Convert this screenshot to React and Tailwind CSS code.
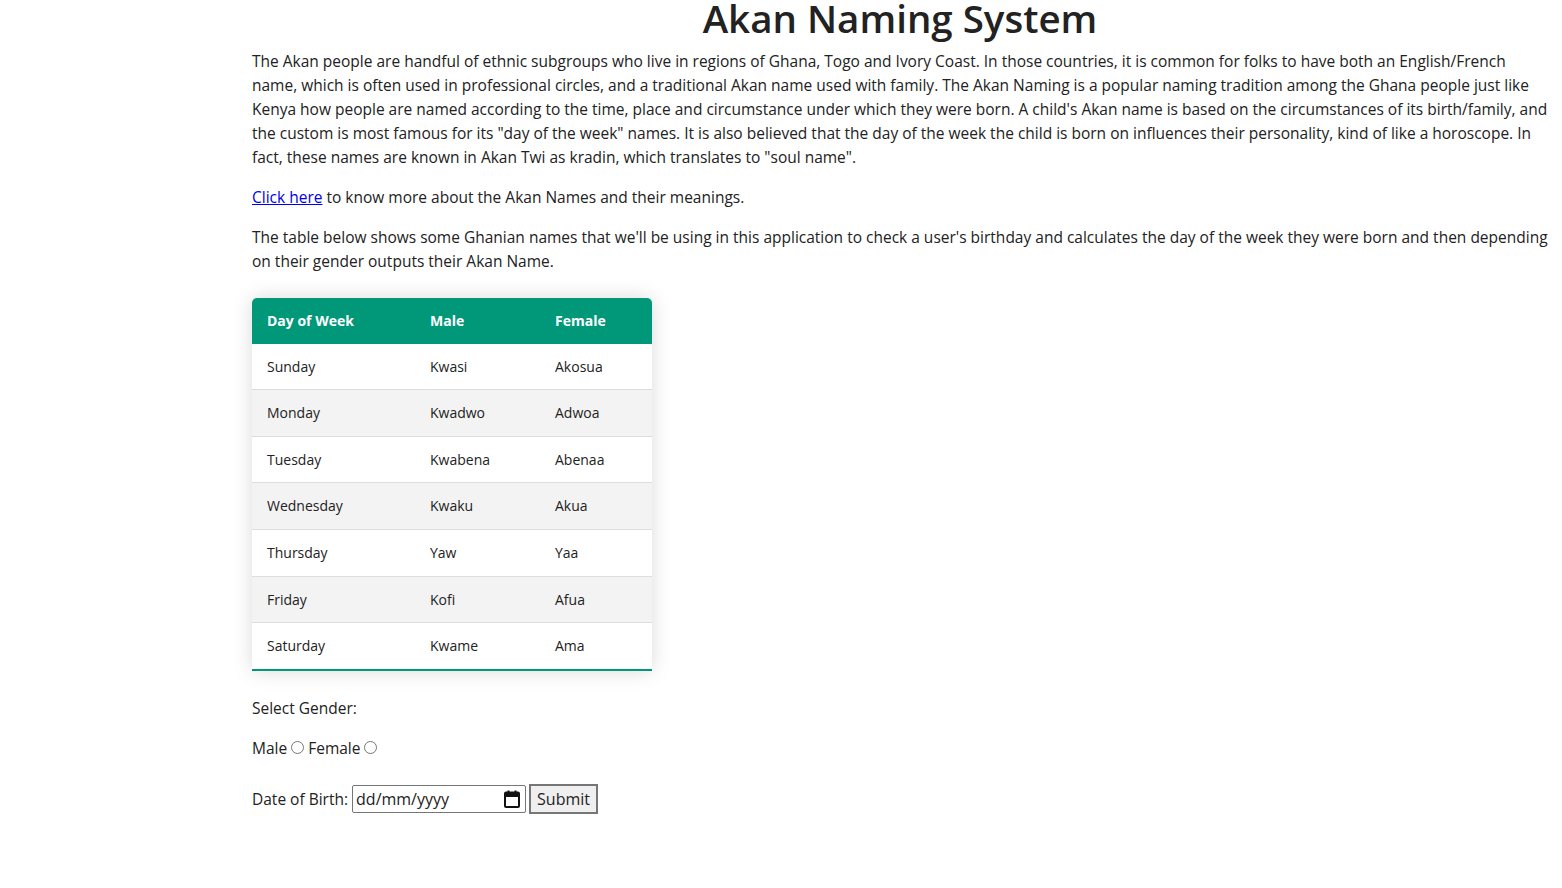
import React from 'react';

const rows = [
  ['Sunday', 'Kwasi', 'Akosua'],
  ['Monday', 'Kwadwo', 'Adwoa'],
  ['Tuesday', 'Kwabena', 'Abenaa'],
  ['Wednesday', 'Kwaku', 'Akua'],
  ['Thursday', 'Yaw', 'Yaa'],
  ['Friday', 'Kofi', 'Afua'],
  ['Saturday', 'Kwame', 'Ama'],
];

function CalendarIcon() {
  return (
    <svg width="16" height="18" viewBox="0 0 16 18" fill="none">
      <rect x="1" y="2.5" width="14" height="14.5" rx="1" stroke="#111" strokeWidth="2" />
      <rect x="1" y="3" width="14" height="4" fill="#111" />
      <rect x="3.5" y="0.5" width="2" height="3" fill="#111" />
      <rect x="10.5" y="0.5" width="2" height="3" fill="#111" />
    </svg>
  );
}

export default function App() {
  return (
    <div className="min-h-[888px] bg-white text-[#222] font-['Open_Sans',sans-serif]">
      <div className="ml-[252px] w-[1296px] text-[15.5px] leading-6">
        <h1 className="text-center text-[38.5px] font-semibold leading-[36px]">Akan Naming System</h1>

        <p className="mt-[13px]">
          The Akan people are handful of ethnic subgroups who live in regions of Ghana, Togo and Ivory Coast. In those
          countries, it is common for folks to have both an English/French name, which is often used in professional
          circles, and a traditional Akan name used with family. The Akan Naming is a popular naming tradition among the
          Ghana people just like Kenya how people are named according to the time, place and circumstance under which
          they were born. A child's Akan name is based on the circumstances of its birth/family, and the custom is most
          famous for its "day of the week" names. It is also believed that the day of the week the child is born on
          influences their personality, kind of like a horoscope. In fact, these names are known in Akan Twi as kradin,
          which translates to "soul name".
        </p>

        <p className="mt-4">
          <a href="#" className="text-[#0000ee] underline">
            Click here
          </a>{' '}
          to know more about the Akan Names and their meanings.
        </p>

        <p className="mt-4">
          The table below shows some Ghanian names that we'll be using in this application to check a user's birthday
          and calculates the day of the week they were born and then depending on their gender outputs their Akan Name.
        </p>

        <div className="my-[25px] w-[400px] overflow-hidden rounded-t-[5px] shadow-[0_0_20px_rgba(0,0,0,0.15)]">
          <table className="w-full border-collapse text-left text-[14px] leading-[21.6px]">
            <thead>
              <tr className="bg-[#009879] text-white">
                <th className="w-[163px] px-[15px] py-3 font-bold">Day of Week</th>
                <th className="w-[125px] px-[15px] py-3 font-bold">Male</th>
                <th className="px-[15px] py-3 font-bold">Female</th>
              </tr>
            </thead>
            <tbody>
              {rows.map((r, i) => (
                <tr
                  key={r[0]}
                  className={
                    (i % 2 === 1 ? 'bg-[#f3f3f3] ' : 'bg-white ') +
                    (i === rows.length - 1 ? 'border-b-2 border-[#009879]' : 'border-b border-[#dddddd]')
                  }
                >
                  {r.map((c) => (
                    <td key={c} className="px-[15px] py-3">
                      {c}
                    </td>
                  ))}
                </tr>
              ))}
            </tbody>
          </table>
        </div>

        <p>Select Gender:</p>

        <p className="mt-4 flex items-center">
          <span>Male</span>
          <input type="radio" name="gender" className="ml-[4px] mr-[4px] h-[13px] w-[13px]" />
          <span>Female</span>
          <input type="radio" name="gender" className="ml-[4px] h-[13px] w-[13px]" />
        </p>

        <div className="mt-[24px] flex items-center">
          <span>Date of Birth:</span>
          <div className="ml-[4px] flex h-[28px] w-[174px] items-center justify-between rounded-[2px] border border-[#767676] pl-[3px] pr-[5px] text-[16px]">
            <span>dd/mm/yyyy</span>
            <CalendarIcon />
          </div>
          <button className="ml-[3px] h-[30px] border-2 border-[#767676] bg-[#efefef] px-[6px] text-[16px]">
            Submit
          </button>
        </div>
      </div>
    </div>
  );
}
